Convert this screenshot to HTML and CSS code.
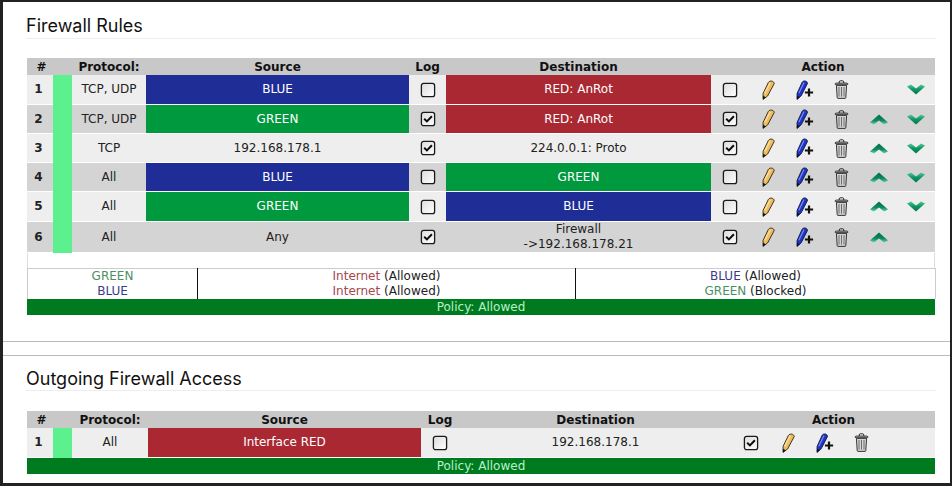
FILE: index.html
```html
<!DOCTYPE html>
<html lang="en">
<head>
<meta charset="utf-8">
<title>Firewall Rules</title>
<link rel="stylesheet" href="styles.css">
</head>
<body>
<svg class="defs" width="0" height="0" aria-hidden="true">
  <defs>
    <linearGradient id="g-up" x1="0" y1="0" x2="0" y2="1"><stop offset="0" stop-color="#066b46"/><stop offset=".6" stop-color="#0a8a5c"/><stop offset="1" stop-color="#6fd0a8"/></linearGradient>
    <linearGradient id="g-down" x1="0" y1="0" x2="0" y2="1"><stop offset="0" stop-color="#5cc79c"/><stop offset=".45" stop-color="#0c9a66"/><stop offset="1" stop-color="#067048"/></linearGradient>
    <linearGradient id="g-box" x1="0" y1="0" x2="1" y2="1"><stop offset="0" stop-color="#dcdcdc"/><stop offset="1" stop-color="#fff"/></linearGradient>
    <symbol id="box" viewBox="0 0 16 16"><rect x="1.4" y="1.4" width="13.2" height="13.2" rx="2.2" fill="url(#g-box)" stroke="#1a1a1a" stroke-width="1.3"/></symbol>
    <symbol id="checked" viewBox="0 0 16 16"><rect x="1.4" y="1.4" width="13.2" height="13.2" rx="2.2" fill="url(#g-box)" stroke="#1a1a1a" stroke-width="1.3"/><path d="M4.2 7.8 6.9 10.4 11.9 5.2" fill="none" stroke="#0c0c0c" stroke-width="2"/></symbol>
    <symbol id="pencil" viewBox="0 0 14 20"><path d="M7.4 2.4C8.6.4 12.9.6 13.2 3.6L6.6 16 2 19.4l.1-6z" fill="#eebc5e" stroke="#2a2214" stroke-width=".9"/><path d="M9.2 2.6 3.8 13.4" stroke="#f8dc98" stroke-width="1.6"/><path d="M2 19.4l.1-3.6 2.7 1.5z" fill="#111"/></symbol>
    <symbol id="pencil-add" viewBox="0 0 20 20"><path d="M7.2 2.2C8.4.3 12.2.5 12.5 3.4L6.2 15.8 2 19.4l.1-6z" fill="#1c34c8" stroke="#10163a" stroke-width=".9"/><path d="M9 2.6 3.8 13.2" stroke="#7d8cf0" stroke-width="1.2"/><path d="M2 19.4l.1-3.6 2.7 1.5z" fill="#111"/><path d="M14 8.4v8.2M9.9 12.5h8.2" stroke="#111" stroke-width="2.2"/></symbol>
    <symbol id="trash" viewBox="0 0 15 19"><path d="M2.4 5.4 3.2 17.6c0 .5.4.8.8.8h7c.4 0 .8-.3.8-.8l.8-12.2z" fill="#d2d2d2" stroke="#222" stroke-width=".9"/><path d="M1 4.3c0-.8.6-1.2 1.2-1.2h10.6c.6 0 1.2.4 1.2 1.2z" fill="#eee" stroke="#222" stroke-width=".9"/><path d="M5.2 3V2c0-.7.5-1.2 1.2-1.2h2.2c.7 0 1.2.5 1.2 1.2v1" fill="none" stroke="#222" stroke-width="1"/><path d="M5 7v9.6M7.5 7v9.6M10 7v9.6" stroke="#6e6e6e" stroke-width="1"/></symbol>
    <symbol id="up" viewBox="0 0 18 11"><path d="M9 .4 18 8.6 14 10.4 9 6.4 4 10.4 0 8.6z" fill="url(#g-up)"/></symbol>
    <symbol id="down" viewBox="0 0 18 11"><path d="M9 10.6 0 2.4 4 .6 9 4.6 14 .6 18 2.4z" fill="url(#g-down)"/></symbol>
  </defs>
</svg>
<main class="page">
  <section class="section section-rules">
    <h2 class="title">Firewall Rules</h2>
    <table class="rules rules-main">
      <colgroup>
        <col class="c-num"><col class="c-mark"><col class="c-proto"><col class="c-src"><col class="c-log"><col class="c-dst">
        <col class="c-a1"><col class="c-a2"><col class="c-a3"><col class="c-a4"><col class="c-a5"><col class="c-a6">
      </colgroup>
      <thead>
        <tr><th class="hash">#</th><th></th><th>Protocol:</th><th>Source</th><th>Log</th><th>Destination</th><th colspan="6">Action</th></tr>
      </thead>
      <tbody>
        <tr class="odd h29">
          <td class="num">1</td><td class="mark"></td><td>TCP, UDP</td><td class="blue">BLUE</td>
          <td><svg class="i-box"><use href="#box"/></svg></td><td class="red">RED: AnRot</td>
          <td><svg class="i-box"><use href="#box"/></svg></td><td><svg class="i-pen"><use href="#pencil"/></svg></td><td><svg class="i-add"><use href="#pencil-add"/></svg></td><td><svg class="i-trash"><use href="#trash"/></svg></td><td></td><td><svg class="i-arrow"><use href="#down"/></svg></td>
        </tr>
        <tr class="even h29">
          <td class="num">2</td><td class="mark"></td><td>TCP, UDP</td><td class="green">GREEN</td>
          <td><svg class="i-box"><use href="#checked"/></svg></td><td class="red">RED: AnRot</td>
          <td><svg class="i-box"><use href="#checked"/></svg></td><td><svg class="i-pen"><use href="#pencil"/></svg></td><td><svg class="i-add"><use href="#pencil-add"/></svg></td><td><svg class="i-trash"><use href="#trash"/></svg></td><td><svg class="i-arrow"><use href="#up"/></svg></td><td><svg class="i-arrow"><use href="#down"/></svg></td>
        </tr>
        <tr class="odd h29">
          <td class="num">3</td><td class="mark"></td><td>TCP</td><td>192.168.178.1</td>
          <td><svg class="i-box"><use href="#checked"/></svg></td><td>224.0.0.1: Proto</td>
          <td><svg class="i-box"><use href="#checked"/></svg></td><td><svg class="i-pen"><use href="#pencil"/></svg></td><td><svg class="i-add"><use href="#pencil-add"/></svg></td><td><svg class="i-trash"><use href="#trash"/></svg></td><td><svg class="i-arrow"><use href="#up"/></svg></td><td><svg class="i-arrow"><use href="#down"/></svg></td>
        </tr>
        <tr class="even h29">
          <td class="num">4</td><td class="mark"></td><td>All</td><td class="blue">BLUE</td>
          <td><svg class="i-box"><use href="#box"/></svg></td><td class="green">GREEN</td>
          <td><svg class="i-box"><use href="#box"/></svg></td><td><svg class="i-pen"><use href="#pencil"/></svg></td><td><svg class="i-add"><use href="#pencil-add"/></svg></td><td><svg class="i-trash"><use href="#trash"/></svg></td><td><svg class="i-arrow"><use href="#up"/></svg></td><td><svg class="i-arrow"><use href="#down"/></svg></td>
        </tr>
        <tr class="odd h30">
          <td class="num">5</td><td class="mark"></td><td>All</td><td class="green">GREEN</td>
          <td><svg class="i-box"><use href="#box"/></svg></td><td class="blue">BLUE</td>
          <td><svg class="i-box"><use href="#box"/></svg></td><td><svg class="i-pen"><use href="#pencil"/></svg></td><td><svg class="i-add"><use href="#pencil-add"/></svg></td><td><svg class="i-trash"><use href="#trash"/></svg></td><td><svg class="i-arrow"><use href="#up"/></svg></td><td><svg class="i-arrow"><use href="#down"/></svg></td>
        </tr>
        <tr class="even h30">
          <td class="num">6</td><td class="mark"></td><td>All</td><td>Any</td>
          <td><svg class="i-box"><use href="#checked"/></svg></td><td class="two-line">Firewall<br>-&gt;192.168.178.21</td>
          <td><svg class="i-box"><use href="#checked"/></svg></td><td><svg class="i-pen"><use href="#pencil"/></svg></td><td><svg class="i-add"><use href="#pencil-add"/></svg></td><td><svg class="i-trash"><use href="#trash"/></svg></td><td><svg class="i-arrow"><use href="#up"/></svg></td><td></td>
        </tr>
      </tbody>
    </table>
    <div class="spacer"></div>
    <table class="summary">
      <colgroup><col class="s-1"><col class="s-2"><col class="s-3"></colgroup>
      <tbody>
        <tr>
          <td><span class="t-green">GREEN</span><br><span class="t-blue">BLUE</span></td>
          <td class="ruled"><span class="t-red">Internet</span> (Allowed)<br><span class="t-red">Internet</span> (Allowed)</td>
          <td class="ruled"><span class="t-blue">BLUE</span> (Allowed)<br><span class="t-green">GREEN</span> (Blocked)</td>
        </tr>
      </tbody>
    </table>
    <div class="policy">Policy: Allowed</div>
  </section>
  <div class="gap"></div>
  <section class="section section-out">
    <h2 class="title">Outgoing Firewall Access</h2>
    <table class="rules rules-out">
      <colgroup>
        <col class="o-num"><col class="o-mark"><col class="o-proto"><col class="o-src"><col class="o-log"><col class="o-dst">
        <col class="o-a1"><col class="o-a2"><col class="o-a3"><col class="o-a4"><col class="o-a5">
      </colgroup>
      <thead>
        <tr><th class="hash">#</th><th></th><th>Protocol:</th><th>Source</th><th>Log</th><th>Destination</th><th colspan="5">Action</th></tr>
      </thead>
      <tbody>
        <tr class="odd h29">
          <td class="num">1</td><td class="mark"></td><td>All</td><td class="red">Interface RED</td>
          <td><svg class="i-box"><use href="#box"/></svg></td><td>192.168.178.1</td>
          <td><svg class="i-box"><use href="#checked"/></svg></td><td><svg class="i-pen"><use href="#pencil"/></svg></td><td><svg class="i-add"><use href="#pencil-add"/></svg></td><td><svg class="i-trash"><use href="#trash"/></svg></td><td></td>
        </tr>
      </tbody>
    </table>
    <div class="policy">Policy: Allowed</div>
  </section>
</main>
</body>
</html>
```
FILE: styles.css
```css
* { box-sizing: border-box; }
html, body { margin: 0; padding: 0; }
body {
  width: 952px;
  height: 486px;
  overflow: hidden;
  background: #222;
  font-family: "DejaVu Sans", sans-serif;
  font-size: 12px;
  color: #222;
}
.defs { display: block; height: 0; }
.page {
  margin: 2px 2px 3px 3px;
  height: 481px;
  background: #fff;
  display: flex;
  flex-direction: column;
}
.section { padding: 0 14px 0 23px; }
.section-rules { padding-top: 13px; height: 340px; border-bottom: 1px solid #bbb; }
.gap { height: 13px; }
.section-out { border-top: 1px solid #bbb; padding-top: 12px; }
.title {
  margin: 0;
  line-height: 22px;
  font-family: "Inter", sans-serif;
  font-size: 18px;
  font-weight: 400;
  color: #111;
  border-bottom: 1px solid #eee;
}
.section-rules .title { height: 24px; }
.section-out .title { height: 23px; }
.rules {
  margin: 19px 0 0 1px;
  width: 908px;
  table-layout: fixed;
  border-collapse: collapse;
  border-spacing: 0;
  text-align: center;
}
.section-out .rules { margin-top: 20px; }
.rules th {
  height: 17px;
  padding: 2px 0 0;
  background: #c8c8c8;
  font-size: 12px;
  line-height: 15px;
  color: #111;
}
.rules th.hash { padding-left: 3px; }
.rules td { padding: 1px 0 0; line-height: 15px; vertical-align: middle; border-bottom: 1px solid #fff; }
.rules td.two-line { padding-top: 0; }
.h29 { height: 29px; }
.h30 { height: 30px; }
.odd td { background: #eee; }
.even td { background: #d4d4d4; }
.rules td.num { font-weight: 700; padding-right: 3px; }
.rules td.mark { background: #5cf08e; border-bottom-color: #5cf08e; }
.rules td.blue { background: #1f2e96; color: #fff; }
.rules td.green { background: #00993d; color: #fff; }
.rules td.red { background: #a92832; color: #fff; }
.rules td svg { display: block; margin: 0 auto; }
.i-box { width: 16px; height: 16px; }
.i-pen { width: 14px; height: 20px; }
.i-add { width: 20px; height: 20px; }
.i-trash { width: 15px; height: 19px; }
.i-arrow { width: 18px; height: 11px; }
.c-num { width: 26px; } .c-mark { width: 19px; } .c-proto { width: 74px; } .c-src { width: 263px; }
.c-log { width: 37px; } .c-dst { width: 265px; } .c-a1 { width: 38px; } .c-a2 { width: 37px; }
.c-a3 { width: 37px; } .c-a4 { width: 37px; } .c-a5 { width: 37px; } .c-a6 { width: 38px; }
.o-num { width: 26px; } .o-mark { width: 19px; } .o-proto { width: 76px; } .o-src { width: 273px; }
.o-log { width: 38px; } .o-dst { width: 273px; } .o-a1 { width: 38px; } .o-a2 { width: 36px; }
.o-a3 { width: 37px; } .o-a4 { width: 36px; } .o-a5 { width: 56px; }
.spacer { margin-left: 1px; width: 908px; height: 15px; border-left: 1px solid #ddd; border-right: 1px solid #ddd; }
.summary {
  margin-left: 1px;
  width: 908px;
  height: 31px;
  table-layout: fixed;
  border-collapse: collapse;
  border-top: 1px solid #ccc;
  border-left: 1px solid #ccc;
  border-right: 1px solid #ccc;
  text-align: center;
  line-height: 15px;
}
.summary td { padding: 0; }
.s-1 { width: 170px; } .s-2 { width: 378px; } .s-3 { width: 360px; }
.summary td.ruled { border-left: 1px solid #111; }
.t-green { color: #4b8f63; }
.t-blue { color: #3a3a8c; }
.t-red { color: #a5484c; }
.policy {
  margin-left: 1px;
  width: 908px;
  height: 16px;
  line-height: 16px;
  background: #007a1f;
  color: #b8f0c8;
  text-align: center;
}
```
